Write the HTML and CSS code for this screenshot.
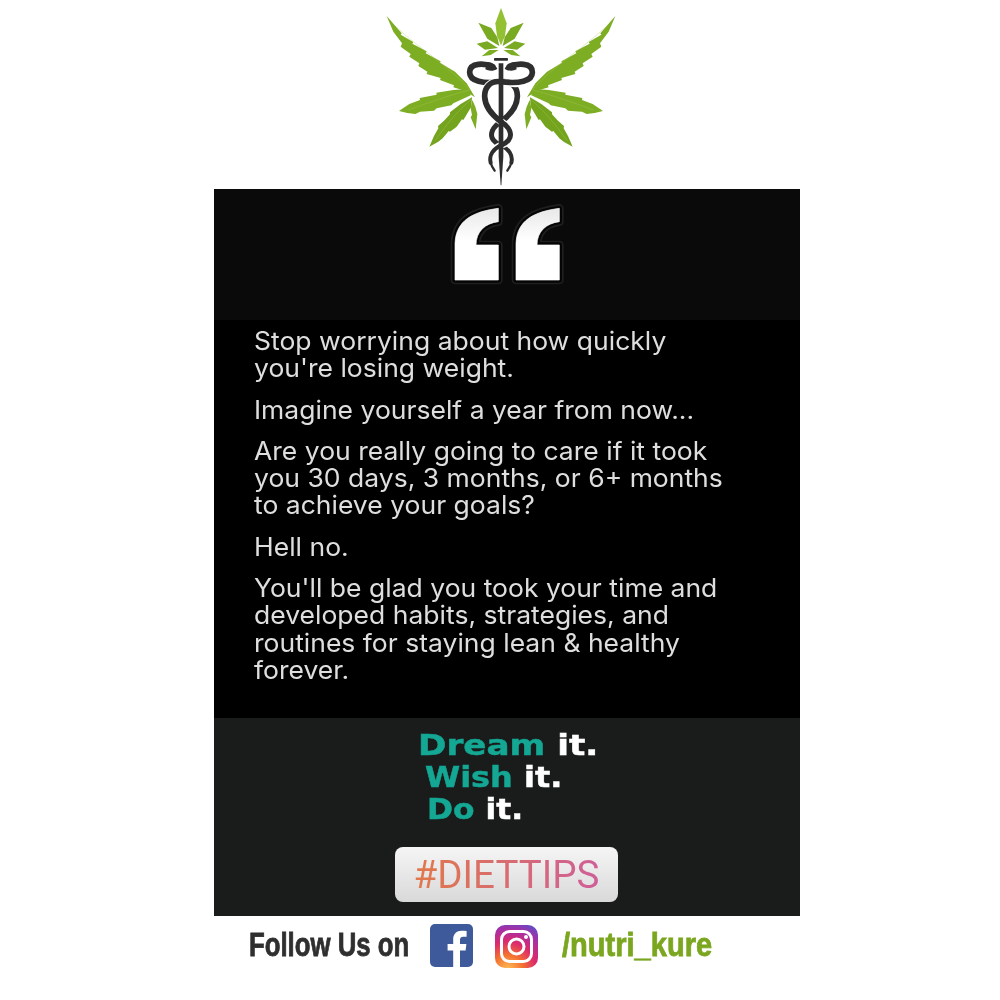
FILE: index.html
```html
<!DOCTYPE html>
<html lang="en">
<head>
<meta charset="utf-8">
<title>Diet tips</title>
<link rel="stylesheet" href="styles.css">
</head>
<body>
<div class="page">
  <header class="logo-row">
    <svg class="logo" viewBox="0 0 780 570" width="260" height="190" aria-hidden="true">
      <defs>
        <g id="leaves">
          <path fill="#7dad23" d="M50 48 L95 100 L92 104 L130 126 L127 131 L170 154 L167 160 L212 184 L210 188 L255 215 L290 250 L315 292 L285 272 L250 262 L252 256 L210 240 L212 234 L170 222 L172 215 L145 198 L148 190 L118 170 L122 162 L92 140 L96 130 L70 95 Z"/>
          <path fill="#7dad23" d="M87 333 L118 312 L150 300 L149 294 L200 284 L199 278 L250 270 L300 266 L302 286 L278 297 L250 310 L244 316 L200 325 L192 332 L150 335 L136 342 L112 339 Z"/>
          <path fill="#74a41e" d="M178 440 L192 408 L205 385 L204 378 L222 362 L240 343 L240 337 L272 312 L306 292 L304 320 L280 360 L276 358 L260 380 L240 395 L236 393 L218 415 L205 425 Z"/>
          <path fill="#7dad23" d="M317 388 L302 352 L306 345 L302 325 L307 300 L316 320 L322 342 L320 360 Z"/>
          <g fill="none" stroke="#a9c95e" stroke-width="1.500" opacity="0.7">
            <path d="M80 82 C140 140 240 200 300 270"/>
            <path d="M115 330 C170 310 240 285 298 270"/>
            <path d="M195 422 C225 380 260 335 304 298"/>
          </g>
          <path fill="#93c133" d="M393 24 L410 70 L405 108 L393 136 Z"/>
          <path fill="#79aa22" d="M325 68 L364 84 L382 112 L388 138 L352 116 Z"/>
          <path fill="#79aa22" d="M320 131 L352 124 L384 144 L345 149 Z"/>
          <path fill="#7dad23" d="M335 169 L358 150 L386 150 L362 165 Z"/>
        </g>
        <g id="snake">
          <path class="snake-gap" d="M342 250 C358 252 376 248 393 245 C425 241 443 262 442 290 C441 322 420 345 393 365 C366 382 358 404 370 420 C376 428 384 433 393 436 C416 446 430 466 424 488"/>
          <g fill="none" stroke="#2e2e2e" stroke-linecap="round" stroke-linejoin="round">
            <path stroke-width="17" d="M368 200 C345 190 300 186 299 216 C298 244 340 252 393 245 C425 241 443 262 442 290 C441 322 420 345 393 365"/>
            <path stroke-width="15" d="M393 365 C366 382 358 404 370 420 C376 428 384 433 393 436"/>
            <path stroke-width="12" d="M393 436 C416 446 430 466 424 488"/>
            <path stroke-width="7" d="M424 488 C422 496 418 504 412 512"/>
          </g>
          <path fill="#2e2e2e" d="M350 186 C364 184 376 194 382 206 C372 214 356 214 346 208 Z"/>
        </g>
      </defs>
      <use href="#leaves"/>
      <use href="#leaves" transform="translate(786 0) scale(-1 1)"/>
      <use href="#snake"/>
      <use href="#snake" transform="translate(786 0) scale(-1 1)"/>
      <rect class="ink" x="372" y="174" width="42" height="8" rx="2"/>
      <path class="ink" d="M386 190 L400 190 L400 470 L394 556 L392 556 L386 470 Z"/>
    </svg>
  </header>

  <main class="card">
    <section class="quote-band">
      <svg class="quote-mark" viewBox="0 0 450 420" width="150" height="140" aria-hidden="true">
        <defs>
          <linearGradient id="quote-fill" x1="0" y1="0" x2="0" y2="1">
            <stop offset="0" stop-color="#e8e8e8"/>
            <stop offset="0.45" stop-color="#ffffff"/>
          </linearGradient>
          <g id="quote-shapes">
            <path d="M205 55 C130 65 78 90 75 160 L75 270 L205 270 L205 165 L138 165 C138 125 165 100 205 95 Z"/>
            <path d="M388 55 C313 65 261 90 258 160 L258 270 L388 270 L388 165 L321 165 C321 125 348 100 388 95 Z"/>
          </g>
        </defs>
        <use href="#quote-shapes" class="quote-halo"/>
        <use href="#quote-shapes" class="quote-gap"/>
        <use href="#quote-shapes" class="quote-face"/>
      </svg>
    </section>

    <section class="message">
      <p>Stop worrying about how quickly<br>you're losing weight.</p>
      <p>Imagine yourself a year from now...</p>
      <p>Are you really going to care if it took<br>you 30 days, 3 months, or 6+ months<br>to achieve your goals?</p>
      <p>Hell no.</p>
      <p>You'll be glad you took your time and<br>developed habits, strategies, and<br>routines for staying lean &amp; healthy<br>forever.</p>
    </section>

    <section class="motto-band">
      <div class="motto">
        <div class="motto-line line-dream"><b>Dream</b> <span>it.</span></div>
        <div class="motto-line line-wish"><b>Wish</b> <span>it.</span></div>
        <div class="motto-line line-do"><b>Do</b> <span>it.</span></div>
      </div>
      <div class="pill"><span class="pill-text">#DIETTIPS</span></div>
    </section>
  </main>

  <footer class="follow">
    <div class="follow-slot"><span class="follow-label">Follow Us on</span></div>
    <svg class="icon-fb" viewBox="0 0 43 43" width="43" height="43" aria-hidden="true">
      <rect width="43" height="43" rx="5" fill="#3f5a9a"/>
      <path fill="#fff" d="M30 43 V26.500 H35.600 L36.400 20 H30 V16 C30 14.100 30.600 12.800 33.300 12.800 H36.600 V7 C36 6.900 34 6.700 31.600 6.700 C26.600 6.700 23.200 9.700 23.200 15.300 V20 H17.600 V26.500 H23.200 V43 Z"/>
    </svg>
    <svg class="icon-ig" viewBox="0 0 43 43" width="43" height="43" aria-hidden="true">
      <defs>
        <radialGradient id="ig-fill" cx="0.3" cy="1.05" r="1.2">
          <stop offset="0" stop-color="#fdc15a"/>
          <stop offset="0.3" stop-color="#f4702f"/>
          <stop offset="0.55" stop-color="#dc2a6c"/>
          <stop offset="0.8" stop-color="#a52fa6"/>
          <stop offset="1" stop-color="#5a50c8"/>
        </radialGradient>
      </defs>
      <rect width="43" height="43" rx="10" fill="url(#ig-fill)"/>
      <rect class="ig-line" x="6.500" y="6.500" width="30" height="30" rx="8"/>
      <circle class="ig-line" cx="21.500" cy="21.500" r="7.500"/>
      <circle cx="31" cy="12" r="2" fill="#fff"/>
    </svg>
    <span class="handle">/nutri_kure</span>
  </footer>
</div>
</body>
</html>
```

FILE: styles.css
```css
* { box-sizing: border-box; }

html, body {
  margin: 0;
  padding: 0;
  background: #fff;
}

.page {
  width: 1000px;
  height: 1000px;
  overflow: hidden;
  font-family: "Inter", "Liberation Sans", sans-serif;
}

.logo-row {
  height: 189px;
  padding-left: 370px;
}

.logo { display: block; }
.ink { fill: #2e2e2e; }

.snake-gap {
  fill: none;
  stroke: #fff;
  stroke-width: 22;
  stroke-linecap: round;
}

.card {
  width: 586px;
  height: 727px;
  margin-left: 214px;
  display: flex;
  flex-direction: column;
}

.quote-band {
  height: 131px;
  background: #0a0a0a;
  padding-left: 216px;
}

.quote-mark { display: block; margin-top: 1px; }

.quote-halo { fill: #1f1f1f; stroke: #1f1f1f; stroke-width: 26; stroke-linejoin: round; }
.quote-gap { fill: #050505; stroke: #050505; stroke-width: 16; stroke-linejoin: round; }
.quote-face { fill: url(#quote-fill); stroke: #fff; stroke-width: 2; }

.message {
  height: 398px;
  background: #000;
  padding: 7px 0 0 40px;
  color: #dedede;
  font-size: 25.500px;
  line-height: 27.300px;
}

.message p {
  margin: 0 0 14px;
  white-space: nowrap;
  transform: scaleX(1.04);
  transform-origin: 0 50%;
}

.motto-band {
  flex: 1;
  background: #1a1c1c;
  display: flex;
  flex-direction: column;
}

.motto {
  padding-top: 11px;
  height: 129px;
  font-family: "DejaVu Sans", sans-serif;
  font-size: 29px;
  line-height: 32px;
  font-weight: 700;
}

.motto-line {
  white-space: nowrap;
  transform-origin: 0 50%;
  -webkit-text-stroke: 0.500px currentColor;
}
.motto-line b { color: #14a794; }
.motto-line span { color: #fff; }
.line-dream { margin-left: 204px; transform: scaleX(1.18); }
.line-wish { margin-left: 211px; transform: scaleX(1.1); }
.line-do { margin-left: 213px; transform: scaleX(1.08); }

.pill {
  width: 223px;
  height: 55px;
  margin-left: 181px;
  border-radius: 8px;
  background: linear-gradient(180deg, #f5f5f5, #d9d9d9);
  display: flex;
  align-items: center;
  justify-content: center;
}

.pill-text {
  font-family: "Roboto", sans-serif;
  font-size: 38.600px;
  background: linear-gradient(90deg, #e0794a, #cf5f98);
  -webkit-background-clip: text;
  background-clip: text;
  color: transparent;
}

.follow {
  height: 84px;
  display: flex;
  align-items: flex-start;
  padding: 8px 0 0 249px;
}

.follow-slot { width: 181px; }

.follow-label,
.handle {
  display: inline-block;
  font-family: "Liberation Sans", sans-serif;
  font-weight: 700;
  font-size: 33px;
  line-height: 42px;
  white-space: nowrap;
  transform-origin: 0 50%;
  -webkit-text-stroke: 0.800px currentColor;
}

.follow-label { color: #2f2f2f; transform: scaleX(0.78); }
.icon-fb { margin-right: 22px; }
.icon-ig { margin-top: 1px; margin-right: 24px; }
.handle { color: #7ba61f; transform: scaleX(0.88); }

.ig-line {
  fill: none;
  stroke: #fff;
  stroke-width: 3;
}
```
